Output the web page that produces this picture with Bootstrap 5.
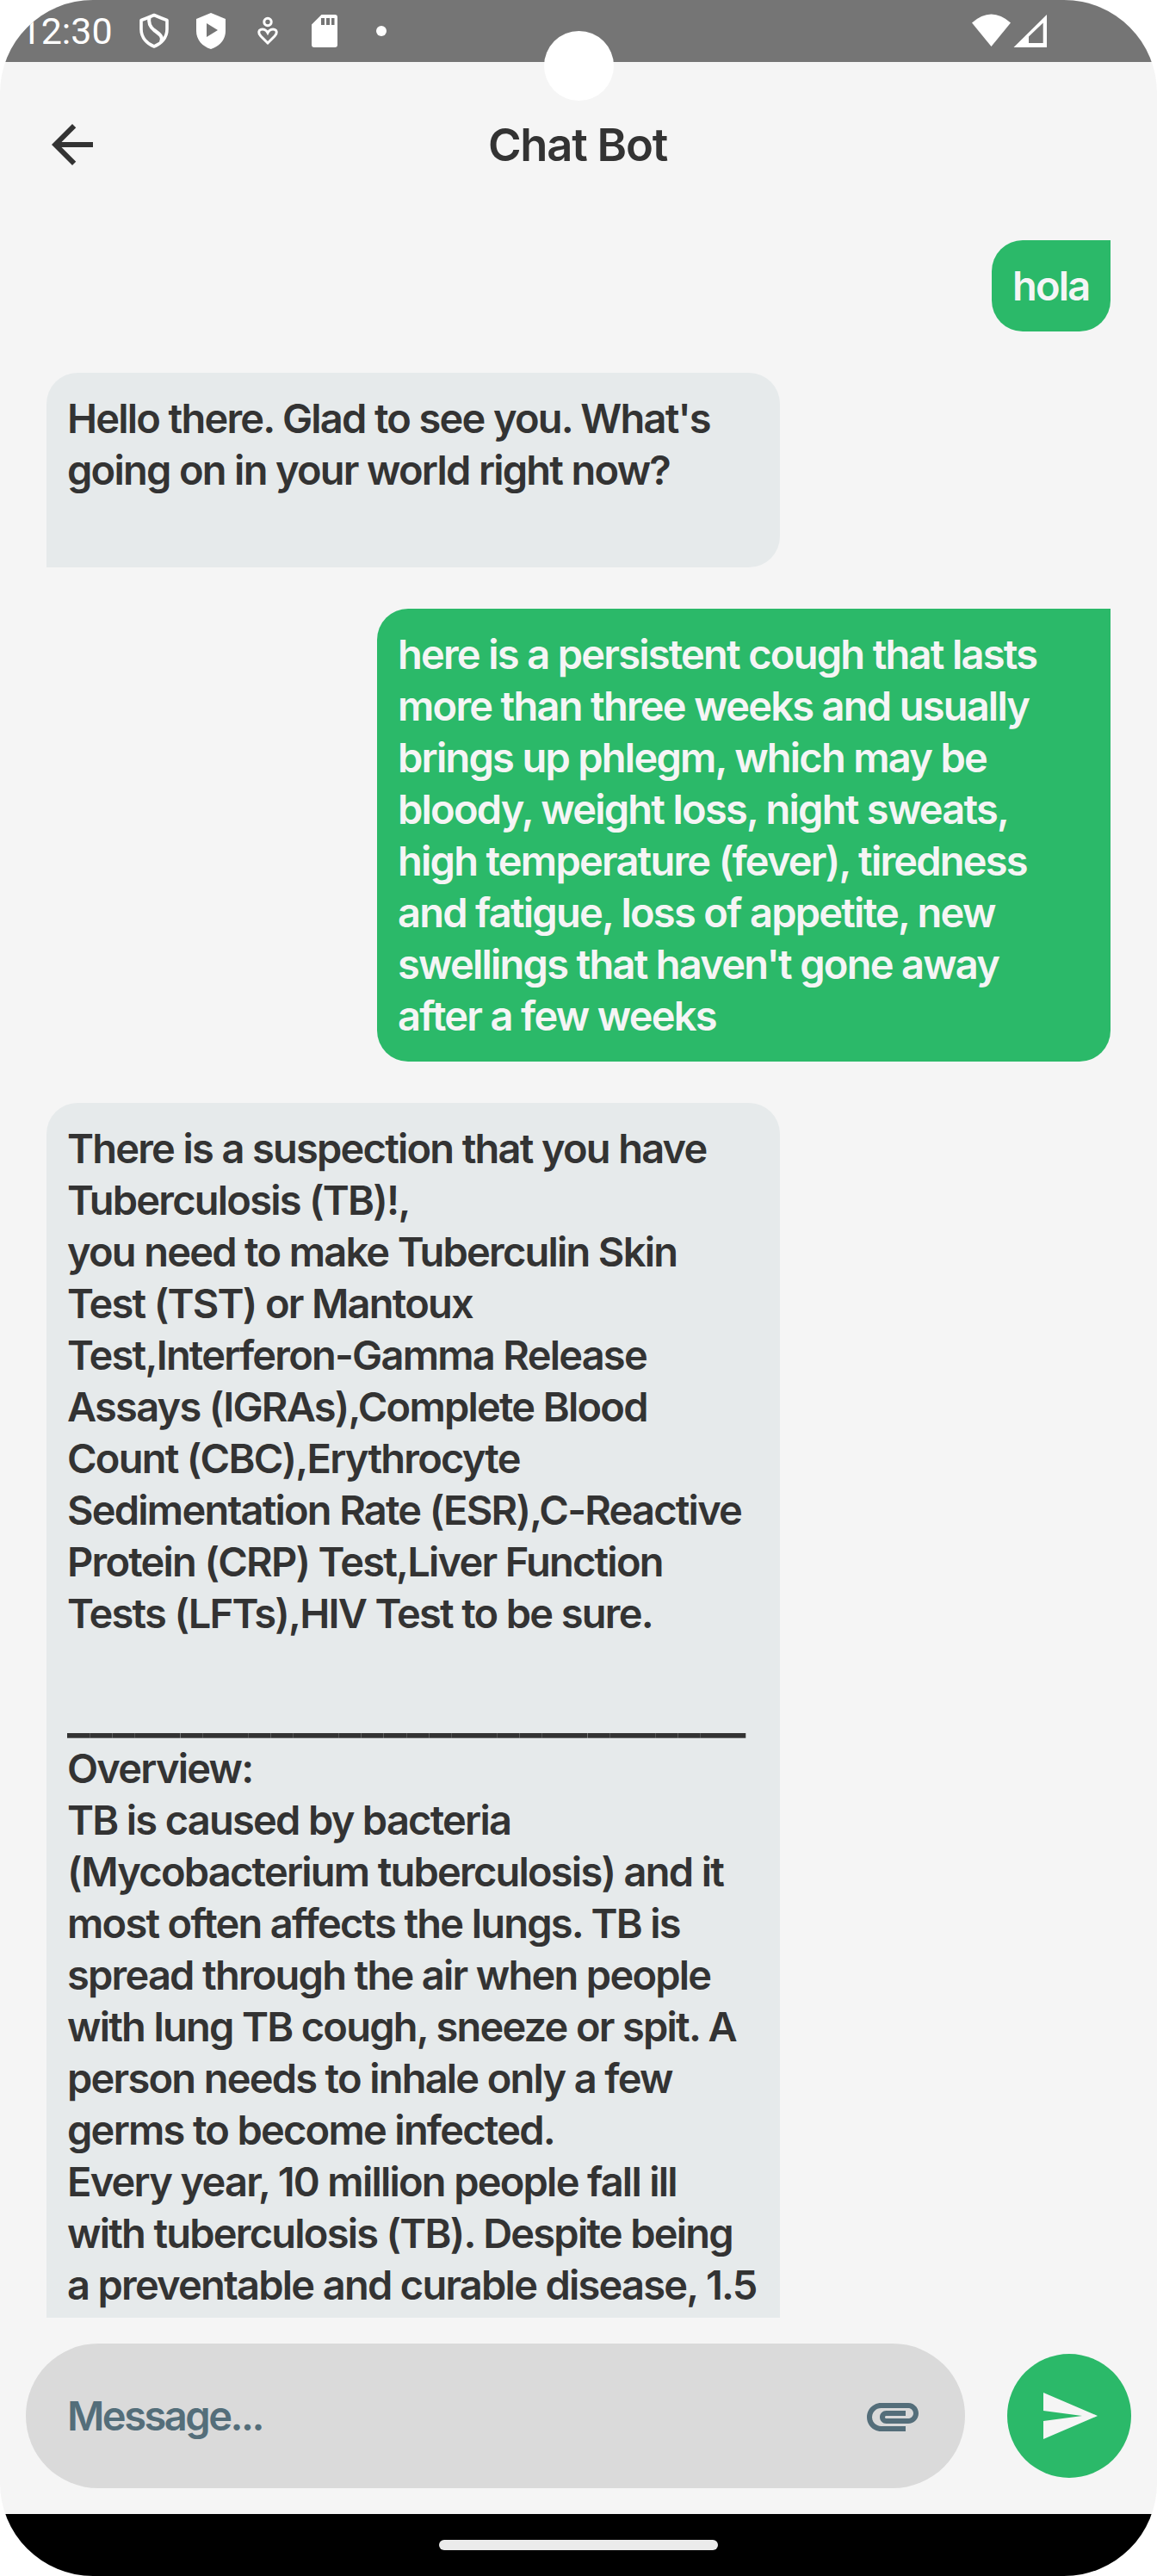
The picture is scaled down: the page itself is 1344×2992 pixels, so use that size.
<!DOCTYPE html>
<html lang="en">
<head>
<meta charset="utf-8">
<meta name="viewport" content="width=device-width, initial-scale=1">
<title>Chat Bot</title>
<link rel="stylesheet" href="https://cdn.jsdelivr.net/npm/bootstrap@5.3.0/dist/css/bootstrap.min.css">
<style>
html, body { margin: 0; background: #fff; }
body { font-family: Inter, "Liberation Sans", sans-serif; color: #333; }
.phone { width: 1344px; height: 2992px; border-radius: 108px; background: #f5f5f5; }
.statusbar { height: 72px; background: #757575; color: #fff; }
.clock { font: 400 43px/72px Roboto, sans-serif; padding-left: 23.5px; width: 162px; }
.lens { width: 81px; height: 81px; top: 35.5px; left: 631.5px; background: #fff; z-index: 2; }
.signals { box-sizing: content-box; padding-right: 128px; }
.appbar { height: 207px; padding: 60px 48px 0; }
.appbar h1 { font-size: 52.5px; font-weight: 580; line-height: 72px; letter-spacing: -1.2px; margin-right: 74px; }
.thread { height: 2413px; padding: 0 54px; gap: 48px; }
.bubble { font-size: 47px; font-weight: 570; line-height: 60px; letter-spacing: -1.78px; word-spacing: .3px; padding: 23px 24px; white-space: nowrap; border-radius: 36px; }
.bubble.wide { width: 852px; }
.bubble.tiny { width: 138px; }
.rule-text { font-size: 56px; letter-spacing: 0; line-height: 0; vertical-align: -2px; }
.sent { background: #2bb969; color: #f5f5f5; border-top-right-radius: 0; }
.received { background: #e6eaeb; border-bottom-left-radius: 0; }
.composer { height: 228px; padding: 0 30px; }
.field { width: 1091px; height: 168px; border-radius: 84px; background: #dadada; color: #546e7a; padding: 0 48px; font-size: 47px; font-weight: 570; letter-spacing: -2.5px; }
.send { width: 144px; height: 144px; background: #2bb969; }
.navstrip { height: 72px; background: #000; }
.handle { width: 324px; height: 12px; background: #ebebeb; }
</style>
</head>
<body>
<div class="phone position-relative overflow-hidden d-flex flex-column">
  <div class="statusbar d-flex align-items-center flex-shrink-0">
    <div class="clock">12:30</div>
    <svg width="300" height="72" viewBox="162 0 300 72" fill="none" stroke="#fff">
      <path d="M179 17.500 Q187 21 194 23.500 V34 C194 44 187 51 179 54 C171 51 164 44 164 34 V23.500 Q171 21 179 17.500Z" stroke-width="3.600" stroke-linejoin="round"/>
      <path d="M173.500 20 C172 27 174 31 179 35 C186 40 190 43 187 49" stroke-width="4"/>
      <path fill="#fff" stroke="none" fill-rule="evenodd" d="M245 15 L262 22 V36 C262 46 255 54 245 57 C235 54 228 46 228 36 V22Z M240 27 V43 L253 35Z"/>
      <circle cx="311" cy="25.500" r="4.200" stroke-width="3"/>
      <path d="M311 50 L303 42 C296 34.500 307 30.500 311 38 C315 30.500 326 34.500 319 42Z" stroke-width="3"/>
      <path fill="#fff" stroke="none" fill-rule="evenodd" d="M373.500 17 H389 Q392 17 392 20 V52 Q392 55 389 55 H365 Q362 55 362 52 V28.500Z M373 21 V29 H377 V21Z M379 21 V29 H383 V21Z M385 21 V29 H388.500 V21Z"/>
      <circle cx="443" cy="36" r="6" fill="#fff" stroke="none"/>
    </svg>
    <svg class="signals ms-auto" width="88" height="72" viewBox="1128 0 88 72" fill="#fff">
      <path d="M1129 26.500 Q1151.500 6.500 1174 26.500 L1151.500 54Z"/>
      <path fill-rule="evenodd" d="M1177.500 55 L1216 17 V55Z M1195 50 H1211.700 V26.500 L1195 42.500Z"/>
    </svg>
  </div>
  <div class="lens position-absolute rounded-circle"></div>
  <header class="appbar d-flex align-items-start flex-shrink-0">
    <svg class="flex-shrink-0" width="72" height="72" viewBox="0 0 24 24" fill="#333"><path d="M20 11H7.830l5.590-5.590L12 4l-8 8 8 8 1.410-1.410L7.830 13H20v-2z"/></svg>
    <h1 class="mb-0 flex-grow-1 text-center">Chat Bot</h1>
  </header>
  <main class="thread d-flex flex-column align-items-start overflow-hidden flex-shrink-0">
    <div class="bubble sent tiny align-self-end">hola</div>
    <div class="bubble received wide">Hello there. Glad to see you. What's<br>going on in your world right now?<br>&nbsp;</div>
    <div class="bubble sent wide align-self-end">here is a persistent cough that lasts<br>more than three weeks and usually<br>brings up phlegm, which may be<br>bloody, weight loss, night sweats,<br>high temperature (fever), tiredness<br>and fatigue, loss of appetite, new<br>swellings that haven't gone away<br>after a few weeks</div>
    <div class="bubble received wide">There is a suspection that you have<br>Tuberculosis (TB)!,<br>you need to make Tuberculin Skin<br>Test (TST) or Mantoux<br>Test,Interferon-Gamma Release<br>Assays (IGRAs),Complete Blood<br>Count (CBC),Erythrocyte<br>Sedimentation Rate (ESR),C-Reactive<br>Protein (CRP) Test,Liver Function<br>Tests (LFTs),HIV Test to be sure.<br>&nbsp;<br><span class="rule-text">______________________________</span><br>Overview:<br>TB is caused by bacteria<br>(Mycobacterium tuberculosis) and it<br>most often affects the lungs. TB is<br>spread through the air when people<br>with lung TB cough, sneeze or spit. A<br>person needs to inhale only a few<br>germs to become infected.<br>Every year, 10 million people fall ill<br>with tuberculosis (TB). Despite being<br>a preventable and curable disease, 1.5<br>&nbsp;</div>
  </main>
  <div class="composer d-flex align-items-center justify-content-between flex-shrink-0">
    <div class="field d-flex align-items-center justify-content-between">
      <span>Message...</span>
      <svg width="72" height="72" viewBox="0 0 24 24" fill="#546e7a"><path d="M2 12.500C2 9.460 4.460 7 7.500 7H18c2.210 0 4 1.790 4 4s-1.790 4-4 4H9.500C8.120 15 7 13.880 7 12.500S8.120 10 9.500 10H17v2H9.410c-.55 0-.55 1 0 1H18c1.100 0 2-.9 2-2s-.9-2-2-2H7.500C5.570 9 4 10.570 4 12.500S5.570 16 7.500 16H17v2H7.500C4.460 18 2 15.540 2 12.500z"/></svg>
    </div>
    <button class="send btn border-0 rounded-circle p-0 d-flex align-items-center justify-content-center" aria-label="Send">
      <svg width="72" height="72" viewBox="0 0 24 24" fill="#f5f5f5"><path d="M2 21 23 12 2 3v7l15 2-15 2z"/></svg>
    </button>
  </div>
  <div class="navstrip d-flex align-items-center justify-content-center flex-shrink-0"><div class="handle rounded-pill"></div></div>
</div>
<script src="https://cdn.jsdelivr.net/npm/bootstrap@5.3.0/dist/js/bootstrap.bundle.min.js"></script>
</body>
</html>
